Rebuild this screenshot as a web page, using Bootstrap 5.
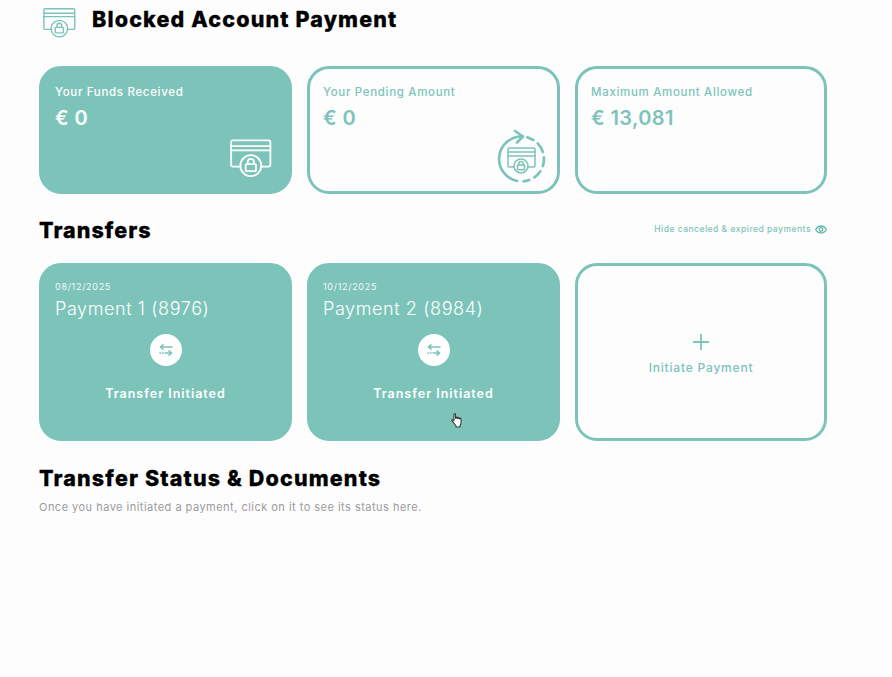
<!DOCTYPE html>
<html lang="en">
<head>
<meta charset="utf-8">
<title>Blocked Account Payment</title>
<link rel="stylesheet" href="https://cdn.jsdelivr.net/npm/bootstrap@5.3.0/dist/css/bootstrap.min.css">
<style>
html,body{height:100%}
body{background:#fdfdfd;font-family:Inter,"Liberation Sans",sans-serif;color:#000;overflow:hidden}
.page-wrap{width:788px;margin-left:39px;padding-top:5px;position:relative}
.title-row{height:29px;padding-left:4px;gap:16px;margin-bottom:32px}
.ttl-ico{color:#7cc4ba;margin-top:6px}
.ttl{font-size:21.5px;font-weight:800;letter-spacing:1.15px;line-height:29px;margin:0;-webkit-text-stroke:.3px #000}
.tiles{display:grid;grid-template-columns:253px 253px 252px;gap:15px}
.tile{border-radius:22px;border:3px solid #7cc4ba;color:#7cc4ba;position:relative;background:transparent}
.tile.filled{background:#7cc4ba;color:#fff}
.sum-tile{height:128px;padding:15px 13px}
.sum-lab{font-size:11.5px;font-weight:500;letter-spacing:.68px;line-height:16px}
.sum-val{font-size:20px;font-weight:600;letter-spacing:.4px;line-height:26px;margin-top:5px}
.tile-ico{position:absolute;color:inherit}
.ico-a{width:42px;height:39px;right:17px;bottom:13px}
.ico-b{width:50px;height:54px;right:10px;bottom:8px}
.sec-row{height:26px;margin-top:23px;margin-bottom:20px}
.sec-ttl{font-size:21.5px;font-weight:800;letter-spacing:1.05px;line-height:26px;margin:0;-webkit-text-stroke:.3px #000}
.hide-link{font-size:8.5px;font-weight:500;letter-spacing:.5px;line-height:12px;color:#7cc4ba;gap:4px;margin-top:-2px}
.pay-tile{height:178px;padding:14px 13px}
.pay-date{font-size:9px;letter-spacing:.7px;line-height:14px;font-weight:400;opacity:.9}
.pay-name{font-size:18px;font-weight:300;letter-spacing:.6px;line-height:24px;margin-top:3px}
.pay-circle{width:32px;height:32px;border-radius:50%;background:#fff;margin:13px auto 0;color:#7cc4ba}
.pay-state{text-align:center;font-size:12.5px;font-weight:600;letter-spacing:.98px;line-height:16px;margin-top:20px}
.add-tile{height:178px;gap:10px;padding-top:5px}
.add-plus{width:16px;height:16px}
.add-lab{font-size:12px;font-weight:500;letter-spacing:.8px;line-height:16px}
.stat-ttl{font-size:21.5px;font-weight:800;letter-spacing:1.15px;line-height:26px;margin:24px 0 0;-webkit-text-stroke:.3px #000}
.stat-txt{font-size:11px;color:#9b9b9b;letter-spacing:.48px;line-height:16px;margin:8px 0 0}
.cursor-hand{position:absolute;left:412px;top:413px;width:12px;height:15px}
</style>
</head>
<body>
<svg width="0" height="0" class="d-block position-absolute">
  <symbol id="cardlock" viewBox="0 0 44 40">
    <g fill="none" stroke="currentColor" stroke-width="1.900" stroke-linejoin="round" stroke-linecap="round">
      <path d="M11 28.500H2.800a1.600 1.600 0 0 1-1.600-1.600V2.600A1.600 1.600 0 0 1 2.800 1h37.900a1.600 1.600 0 0 1 1.600 1.600v24.300a1.600 1.600 0 0 1-1.600 1.600H32.500"/>
      <path d="M1.200 7h41.100M1.200 11.500h41.100"/>
      <circle cx="21.800" cy="27.500" r="11"/>
      <rect x="16.400" y="25.800" width="10.800" height="7.400" rx="1"/>
      <path d="M18.600 25.800v-2.300a3.200 3.200 0 0 1 6.400 0v2.300"/>
    </g>
  </symbol>
</svg>

<div class="page-wrap">
  <div class="title-row d-flex align-items-center">
    <svg width="33" height="30" class="flex-shrink-0 ttl-ico"><use href="#cardlock"/></svg>
    <h1 class="ttl">Blocked Account Payment</h1>
  </div>

  <div class="tiles">
    <div class="tile filled sum-tile">
      <div class="sum-lab">Your Funds Received</div>
      <div class="sum-val">€ 0</div>
      <svg class="tile-ico ico-a"><use href="#cardlock"/></svg>
    </div>
    <div class="tile sum-tile">
      <div class="sum-lab">Your Pending Amount</div>
      <div class="sum-val">€ 0</div>
      <svg class="tile-ico ico-b" viewBox="0 0 50 54">
        <g fill="none" stroke="currentColor" stroke-width="2.700" stroke-linecap="round" stroke-linejoin="round">
          <path d="M25.500 7.500A22.500 22.500 0 0 0 20 52"/>
          <path d="M18 2l8 5.500-6 6"/>
          <path d="M30.300 8.300 36.400 10.900M40.700 14.400A22.500 22.500 0 0 1 45.900 23M46.900 28.400A22.500 22.500 0 0 1 45.900 37M43.400 42.300A22.500 22.500 0 0 1 37.400 48.400M32.200 51.100A22.500 22.500 0 0 1 26.500 52.400"/>
        </g>
        <g fill="none" stroke="currentColor" stroke-width="1.500" stroke-linejoin="round" stroke-linecap="round">
          <path d="M17 38h-5a1 1 0 0 1-1-1V20a1 1 0 0 1 1-1h25a1 1 0 0 1 1 1v17a1 1 0 0 1-1 1h-6"/>
          <path d="M11 23h27M11 27h27"/>
          <circle cx="24" cy="37" r="7"/>
          <rect x="20.500" y="36" width="7" height="4.800" rx=".6"/>
          <path d="M21.900 36v-1.500a2.100 2.100 0 0 1 4.200 0V36"/>
        </g>
      </svg>
    </div>
    <div class="tile sum-tile">
      <div class="sum-lab">Maximum Amount Allowed</div>
      <div class="sum-val">€ 13,081</div>
    </div>
  </div>

  <div class="sec-row d-flex justify-content-between align-items-center">
    <h2 class="sec-ttl">Transfers</h2>
    <div class="hide-link d-flex align-items-center">
      <span>Hide canceled &amp; expired payments</span>
      <svg width="12" height="9" viewBox="0 0 12 9" fill="none" stroke="#5fb5aa" stroke-width="1.300"><path d="M.7 4.500C2 2 3.800 1 6 1s4 1 5.300 3.500C10 7 8.200 8 6 8S2 7 .7 4.500z"/><circle cx="6" cy="4.500" r="1.800"/></svg>
    </div>
  </div>

  <div class="tiles">
    <div class="tile filled pay-tile">
      <div class="pay-date">08/12/2025</div>
      <div class="pay-name">Payment 1 (8976)</div>
      <div class="pay-circle d-flex align-items-center justify-content-center">
        <svg width="14" height="12" viewBox="0 0 14 12" fill="none" stroke="currentColor" stroke-width="1.500" stroke-linecap="round" stroke-linejoin="round"><path d="M13 3H1.500M4 .8 1.300 3 4 5.200"/><path d="M1 9h.6M3.500 9h.6M6 9h6.500M10 6.800 12.700 9 10 11.200"/></svg>
      </div>
      <div class="pay-state">Transfer Initiated</div>
    </div>
    <div class="tile filled pay-tile">
      <div class="pay-date">10/12/2025</div>
      <div class="pay-name">Payment 2 (8984)</div>
      <div class="pay-circle d-flex align-items-center justify-content-center">
        <svg width="14" height="12" viewBox="0 0 14 12" fill="none" stroke="currentColor" stroke-width="1.500" stroke-linecap="round" stroke-linejoin="round"><path d="M13 3H1.500M4 .8 1.300 3 4 5.200"/><path d="M1 9h.6M3.500 9h.6M6 9h6.500M10 6.800 12.700 9 10 11.200"/></svg>
      </div>
      <div class="pay-state">Transfer Initiated</div>
    </div>
    <div class="tile add-tile d-flex flex-column align-items-center justify-content-center">
      <svg class="add-plus" viewBox="0 0 16 16" fill="none" stroke="currentColor" stroke-width="1.800"><path d="M8 0v16M0 8h16"/></svg>
      <div class="add-lab">Initiate Payment</div>
    </div>
  </div>

  <h2 class="stat-ttl">Transfer Status &amp; Documents</h2>
  <p class="stat-txt">Once you have initiated a payment, click on it to see its status here.</p>

  <svg class="cursor-hand" viewBox="0 0 14 17">
    <path d="M3.500 1.500c0-1 1.800-1 1.800 0V6l.7.100V5c0-.8 1.500-.8 1.500 0v1.200l.7.100V5.500c0-.8 1.500-.8 1.500 0v1l.6.100c0-.8 1.400-.8 1.400.1v4.300c0 1.500-.6 2.500-1.200 3.200V16H5.800v-1.500C4.500 13 3 11 1.300 9c-.7-.8.300-1.900 1.200-1.200l1 1z" fill="#fff" stroke="#333" stroke-width="1.200" stroke-linejoin="round"/>
  </svg>
</div>
</body>
</html>
